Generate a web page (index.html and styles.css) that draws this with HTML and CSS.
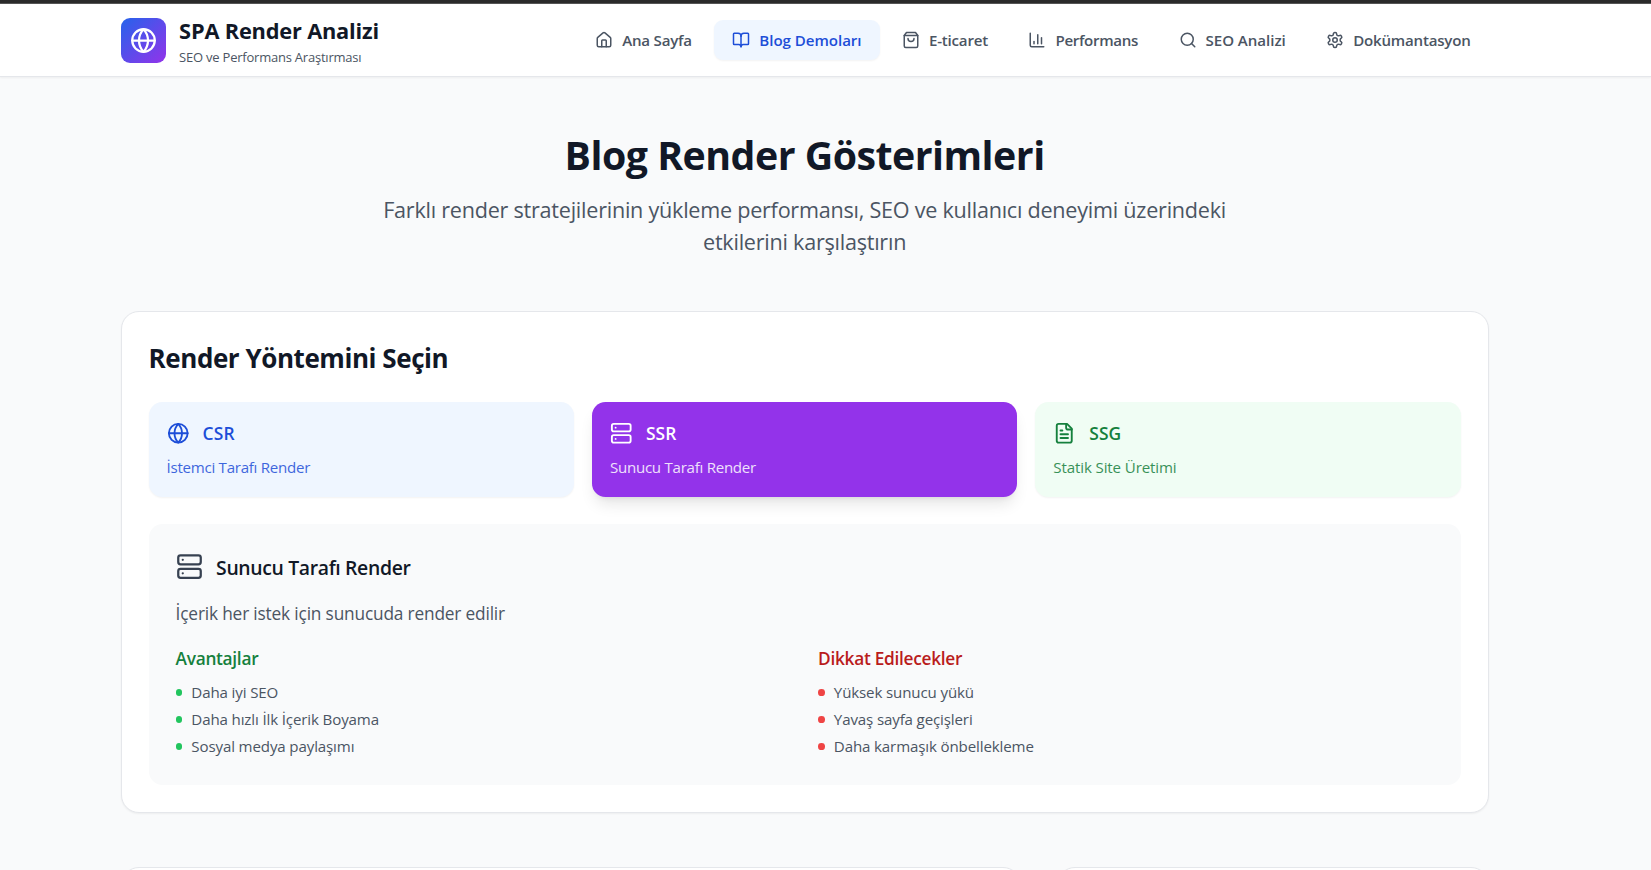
FILE: index.html
```html
<!DOCTYPE html>
<html lang="tr">
<head>
<meta charset="utf-8">
<title>SPA Render Analizi</title>
<link rel="stylesheet" href="styles.css">
</head>
<body>
<svg class="sprite" aria-hidden="true">
  <symbol id="globe" viewBox="0 0 24 24"><circle cx="12" cy="12" r="10"/><path d="M12 2a14.5 14.5 0 0 0 0 20 14.5 14.5 0 0 0 0-20"/><path d="M2 12h20"/></symbol>
  <symbol id="home" viewBox="0 0 24 24"><path d="M15 21v-8a1 1 0 0 0-1-1h-4a1 1 0 0 0-1 1v8"/><path d="M3 10a2 2 0 0 1 .709-1.528l7-5.999a2 2 0 0 1 2.582 0l7 5.999A2 2 0 0 1 21 10v9a2 2 0 0 1-2 2H5a2 2 0 0 1-2-2z"/></symbol>
  <symbol id="book" viewBox="0 0 24 24"><path d="M12 7v14"/><path d="M3 18a1 1 0 0 1-1-1V4a1 1 0 0 1 1-1h5a4 4 0 0 1 4 4 4 4 0 0 1 4-4h5a1 1 0 0 1 1 1v13a1 1 0 0 1-1 1h-6a3 3 0 0 0-3 3 3 3 0 0 0-3-3z"/></symbol>
  <symbol id="bag" viewBox="0 0 24 24"><path d="M6 2 3 6v14a2 2 0 0 0 2 2h14a2 2 0 0 0 2-2V6l-3-4Z"/><path d="M3 6h18"/><path d="M16 10a4 4 0 0 1-8 0"/></symbol>
  <symbol id="chart" viewBox="0 0 24 24"><path d="M3 3v16a2 2 0 0 0 2 2h16"/><path d="M18 17V9"/><path d="M13 17V5"/><path d="M8 17v-3"/></symbol>
  <symbol id="search" viewBox="0 0 24 24"><circle cx="11" cy="11" r="8"/><path d="m21 21-4.3-4.3"/></symbol>
  <symbol id="gear" viewBox="0 0 24 24"><path d="M12.22 2h-.44a2 2 0 0 0-2 2v.18a2 2 0 0 1-1 1.73l-.43.25a2 2 0 0 1-2 0l-.15-.08a2 2 0 0 0-2.73.73l-.22.38a2 2 0 0 0 .73 2.73l.15.1a2 2 0 0 1 1 1.72v.51a2 2 0 0 1-1 1.74l-.15.09a2 2 0 0 0-.73 2.73l.22.38a2 2 0 0 0 2.73.73l.15-.08a2 2 0 0 1 2 0l.43.25a2 2 0 0 1 1 1.73V20a2 2 0 0 0 2 2h.44a2 2 0 0 0 2-2v-.18a2 2 0 0 1 1-1.73l.43-.25a2 2 0 0 1 2 0l.15.08a2 2 0 0 0 2.73-.73l.22-.39a2 2 0 0 0-.73-2.73l-.15-.08a2 2 0 0 1-1-1.74v-.5a2 2 0 0 1 1-1.74l.15-.09a2 2 0 0 0 .73-2.73l-.22-.38a2 2 0 0 0-2.73-.73l-.15.08a2 2 0 0 1-2 0l-.43-.25a2 2 0 0 1-1-1.73V4a2 2 0 0 0-2-2z"/><circle cx="12" cy="12" r="3"/></symbol>
  <symbol id="server" viewBox="0 0 24 24"><rect width="20" height="8" x="2" y="2" rx="2"/><rect width="20" height="8" x="2" y="14" rx="2"/><path d="M6 6h.01"/><path d="M6 18h.01"/></symbol>
  <symbol id="file" viewBox="0 0 24 24"><path d="M15 2H6a2 2 0 0 0-2 2v16a2 2 0 0 0 2 2h12a2 2 0 0 0 2-2V7Z"/><path d="M14 2v4a2 2 0 0 0 2 2h4"/><path d="M10 9H8"/><path d="M16 13H8"/><path d="M16 17H8"/></symbol>
</svg>

<header class="header">
  <div class="container header-row">
    <div class="brand">
      <div class="brand-logo"><svg class="icon icon-lg"><use href="#globe"/></svg></div>
      <div>
        <h1 class="brand-name">SPA Render Analizi</h1>
        <p class="brand-tag">SEO ve Performans Araştırması</p>
      </div>
    </div>
    <nav class="nav">
      <a class="nav-item"><svg class="icon icon-sm"><use href="#home"/></svg><span>Ana Sayfa</span></a>
      <a class="nav-item active loose"><svg class="icon icon-sm"><use href="#book"/></svg><span>Blog Demoları</span></a>
      <a class="nav-item"><svg class="icon icon-sm"><use href="#bag"/></svg><span>E-ticaret</span></a>
      <a class="nav-item tight"><svg class="icon icon-sm"><use href="#chart"/></svg><span>Performans</span></a>
      <a class="nav-item loose"><svg class="icon icon-sm"><use href="#search"/></svg><span>SEO Analizi</span></a>
      <a class="nav-item"><svg class="icon icon-sm"><use href="#gear"/></svg><span>Dokümantasyon</span></a>
    </nav>
  </div>
</header>

<main class="container main">
  <section class="hero">
    <h2 class="hero-title">Blog Render Gösterimleri</h2>
    <p class="hero-text">Farklı render stratejilerinin yükleme performansı, SEO ve kullanıcı deneyimi üzerindeki<br>etkilerini karşılaştırın</p>
  </section>

  <section class="card">
    <h3 class="card-title">Render Yöntemini Seçin</h3>
    <div class="methods">
      <button class="method csr">
        <span class="method-head"><svg class="icon icon-md"><use href="#globe"/></svg><span class="method-name">CSR</span></span>
        <span class="method-text">İstemci Tarafı Render</span>
      </button>
      <button class="method ssr">
        <span class="method-head"><svg class="icon icon-md"><use href="#server"/></svg><span class="method-name">SSR</span></span>
        <span class="method-text">Sunucu Tarafı Render</span>
      </button>
      <button class="method ssg">
        <span class="method-head"><svg class="icon icon-md"><use href="#file"/></svg><span class="method-name">SSG</span></span>
        <span class="method-text">Statik Site Üretimi</span>
      </button>
    </div>

    <div class="detail">
      <div class="detail-head"><svg class="icon icon-lg"><use href="#server"/></svg><h4 class="detail-title">Sunucu Tarafı Render</h4></div>
      <p class="detail-text">İçerik her istek için sunucuda render edilir</p>
      <div class="lists">
        <div class="pros">
          <h5 class="list-title">Avantajlar</h5>
          <ul class="list">
            <li>Daha iyi SEO</li>
            <li>Daha hızlı İlk İçerik Boyama</li>
            <li>Sosyal medya paylaşımı</li>
          </ul>
        </div>
        <div class="cons">
          <h5 class="list-title">Dikkat Edilecekler</h5>
          <ul class="list">
            <li>Yüksek sunucu yükü</li>
            <li>Yavaş sayfa geçişleri</li>
            <li>Daha karmaşık önbellekleme</li>
          </ul>
        </div>
      </div>
    </div>
  </section>

  <div class="next-row">
    <section class="card"></section>
    <section class="card"></section>
  </div>
</main>
</body>
</html>
```
FILE: styles.css
```css
* { box-sizing: border-box; margin: 0; padding: 0; }
html { font-size: 18px; }
body {
  height: 870px;
  overflow: hidden;
  background: #f9fafb;
  border-top: 3px solid #2b2b2b;
  color: #111827;
  font-family: "Open Sans", "Noto Sans", sans-serif;
}
.sprite { display: none; }
.icon { flex: none; fill: none; stroke: currentColor; stroke-width: 2; stroke-linecap: round; stroke-linejoin: round; }
.icon-sm { width: 18px; height: 18px; }
.icon-md { width: 22.5px; height: 22.5px; }
.icon-lg { width: 27px; height: 27px; }

.container { width: 1368px; margin-left: 120.6px; }

.header {
  height: 74px;
  background: #fff;
  border-top: 1px solid #555;
  border-bottom: 1px solid #e5e7eb;
  box-shadow: 0 1px 2px rgba(0, 0, 0, .05);
}
.header-row { display: flex; align-items: center; justify-content: space-between; height: 72px; }
.brand { display: flex; align-items: center; gap: 13.5px; }
.brand-logo {
  display: flex; align-items: center; justify-content: center;
  width: 45px; height: 45px;
  border-radius: 9px;
  background: linear-gradient(to bottom right, #2563eb, #9333ea);
  color: #fff;
}
.brand-name { padding-top: 1px; font-size: 21.8px; line-height: 31.5px; font-weight: 700; letter-spacing: -.009em; }
.brand-tag { padding-top: 1px; font-size: 13px; line-height: 18px; color: #4b5563; letter-spacing: -.017em; }

.nav { display: flex; gap: 4.5px; }
.nav-item {
  display: flex; align-items: center; gap: 9px;
  padding: 9px 18px;
  border-radius: 9px;
  font-size: 15.1px; line-height: 22.5px; font-weight: 600; letter-spacing: -.0145em;
  color: #4b5563;
}
.nav-item span { padding-top: 1px; line-height: 21.5px; }
.nav-item.active { background: #eff6ff; color: #1d4ed8; box-shadow: 0 1px 2px rgba(0, 0, 0, .05); }
.nav-item.loose { letter-spacing: -.003em; }
.nav-item.tight { letter-spacing: -.021em; }

.main { padding-top: 54px; }
.hero { text-align: center; margin-bottom: 54px; }
.hero-title { padding-top: 3px; font-size: 39.3px; line-height: 42px; font-weight: 700; letter-spacing: -.013em; margin-bottom: 17px; }
.hero-text { height: 64px; padding-top: 1px; font-size: 21.6px; line-height: 31.5px; color: #4b5563; letter-spacing: -.0115em; }

.card {
  padding: 27px;
  background: #fff;
  border: 1px solid #e5e7eb;
  border-radius: 18px;
  box-shadow: 0 1px 2px rgba(0, 0, 0, .05);
}
.card-title { padding-top: 2px; font-size: 26px; line-height: 34px; font-weight: 700; letter-spacing: -.017em; margin-bottom: 27px; }

.methods { display: grid; grid-template-columns: repeat(3, 1fr); gap: 18px; margin-bottom: 27px; }
.method {
  padding: 18px;
  border: 0;
  border-radius: 13.5px;
  font-family: inherit;
  text-align: left;
  box-shadow: 0 1px 2px rgba(0, 0, 0, .05);
}
.method-head { display: flex; align-items: center; gap: 13.5px; margin-bottom: 9px; }
.method-name { font-size: 17.4px; line-height: 27px; font-weight: 600; letter-spacing: .006em; }
.method-text { display: block; padding-top: 1px; font-size: 15.1px; line-height: 21.5px; letter-spacing: -.018em; opacity: .85; }
.csr { background: #eff6ff; color: #1d4ed8; }
.ssr { background: #9333ea; color: #fff; box-shadow: 0 10px 15px -3px rgba(0, 0, 0, .1), 0 4px 6px -4px rgba(0, 0, 0, .1); }
.ssg { background: #f0fdf4; color: #15803d; }
.ssg .method-text { letter-spacing: -.008em; }

.detail { padding: 27px; background: #f9fafb; border-radius: 13.5px; }
.detail-head { display: flex; align-items: center; gap: 13.5px; margin-bottom: 18px; color: #374151; }
.detail-title { padding-top: 2px; font-size: 19.4px; line-height: 29.5px; font-weight: 600; letter-spacing: -.018em; color: #111827; }
.detail-text { padding-top: 1px; font-size: 17.3px; line-height: 26px; color: #4b5563; letter-spacing: -.01em; margin-bottom: 18px; }
.lists { display: grid; grid-template-columns: 1fr 1fr; gap: 27px; }
.list-title { padding-top: 1px; font-size: 17.3px; line-height: 26px; font-weight: 600; letter-spacing: -.017em; margin-bottom: 9px; }
.list { display: flex; flex-direction: column; gap: 4.5px; list-style: none; }
.list li { display: flex; align-items: center; gap: 9px; font-size: 15.1px; line-height: 22.5px; letter-spacing: -.009em; color: #4b5563; }
.list li::before { content: ""; width: 6.75px; height: 6.75px; border-radius: 50%; }
.pros .list-title { color: #15803d; }
.pros li::before { background: #22c55e; }
.cons .list { letter-spacing: -.012em; }
.cons .list-title { color: #b91c1c; }
.cons li::before { background: #ef4444; }

.next-row { display: grid; grid-template-columns: 900px 432px; gap: 36px; margin-top: 54px; }
.next-row .card { height: 300px; }
```
